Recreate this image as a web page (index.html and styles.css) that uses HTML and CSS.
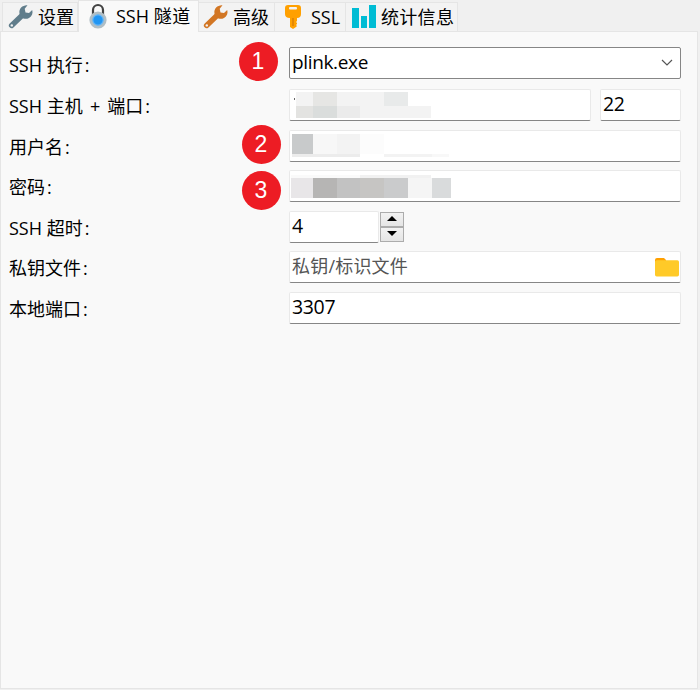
FILE: index.html
```
<!DOCTYPE html>
<html lang="zh-CN">
<head>
<meta charset="utf-8">
<title>SSH 隧道</title>
<link rel="stylesheet" href="styles.css">
</head>
<body>
<nav class="tabs">
  <div class="tab tab-settings">
    <svg class="icon" width="26" height="26" viewBox="0 0 26 26"><path d="M3.600 21.500 14 11.500" stroke="#607d8b" stroke-width="5.400" stroke-linecap="round"/><path d="M19.500 1.300 C15 .8 10.500 4.500 11.500 9.500 C12 14.500 17.500 16 21 14 C24 12.200 25.200 9 24.200 6 L21 9.100 L17.500 8.400 L16.700 4.800Z" fill="#607d8b"/><circle cx="3.800" cy="21.400" r="1.200" fill="#f3f3f3"/></svg>
    <span>设置</span>
  </div>
  <div class="tab tab-active">
    <svg class="icon" width="20" height="26" viewBox="0 0 20 26"><path d="M5 12V7a5 5 0 0 1 10 0V12" fill="none" stroke="#424242" stroke-width="2.200"/><circle cx="10" cy="17" r="8.600" fill="#b0bec5"/><circle cx="10" cy="17" r="5.200" fill="#2196f3" stroke="#64b5f6" stroke-width="1.200"/></svg>
    <span>SSH <em>隧道</em></span>
  </div>
  <div class="tab tab-advanced">
    <svg class="icon" width="26" height="26" viewBox="0 0 26 26"><path d="M3.600 21.500 14 11.500" stroke="#d27624" stroke-width="5.400" stroke-linecap="round"/><path d="M19.500 1.300 C15 .8 10.500 4.500 11.500 9.500 C12 14.500 17.500 16 21 14 C24 12.200 25.200 9 24.200 6 L21 9.100 L17.500 8.400 L16.700 4.800Z" fill="#d27624"/><circle cx="3.800" cy="21.400" r="1.200" fill="#f3f3f3"/></svg>
    <span>高级</span>
  </div>
  <div class="tab tab-ssl">
    <svg class="icon" width="18" height="26" viewBox="0 0 18 26"><path fill="#ffa000" d="M4 1h10q3 0 3 3v6q0 4-4 4v3l-1 1 1 1v1l-1 1 1 1-1 1-3 2-3-2V14Q1 14 1 10V4Q1 1 4 1Z"/><rect x="5" y="3" width="8" height="2.400" rx="1" fill="#f3f3f3"/><path d="M9 14v8" stroke="#d67c05" stroke-width="1.300"/></svg>
    <span>SSL</span>
  </div>
  <div class="tab tab-stats">
    <svg class="icon" width="24" height="26" viewBox="0 0 24 26" fill="#00bcd4"><path d="M0 4h7v20H0zM9 12h6v12H9zM17 1h7v23h-7z"/></svg>
    <span>统计信息</span>
  </div>
</nav>
<main class="panel">
  <div class="row"><label>SSH 执行<i>:</i></label>
    <div class="field select"><span class="exe">plink.exe</span><svg class="chevron" width="12" height="8" viewBox="0 0 12 8"><path d="M1 1l5 5 5-5" fill="none" stroke="#555" stroke-width="1.200"/></svg></div>
    <b class="badge badge-exe">1</b></div>
  <div class="row"><label>SSH 主机 <s>+</s> 端口<i>:</i></label>
    <div class="field host"><svg class="mask" width="160" height="30" shape-rendering="crispEdges"><path d="M3 9l2-1v2z" fill="#666"/><path fill="#f3f3f3" d="M6 2h17v14H6zM47 2h47v14H47zM70 16h71v12H70z"/><path fill="#e6e6e4" d="M23 2h24v14H23z"/><path fill="#e8eaea" d="M94 2h24v14H94z"/><path fill="#e3e3e1" d="M6 16h17v12H6z"/><path fill="#dadddc" d="M23 16h24v12H23z"/><path fill="#ebebeb" d="M47 16h23v12H47z"/></svg></div>
    <div class="field port">22</div></div>
  <div class="row"><label>用户名<i>:</i></label>
    <div class="field"><svg class="mask" width="170" height="30" shape-rendering="crispEdges"><path fill="#c8cacb" d="M2 3h21v20H2z"/><path fill="#f7f7f7" d="M23 3h24v20H23z"/><path fill="#f3f3f3" d="M47 3h23v20H47z"/><path fill="#fcfcfc" d="M70 3h24v20H70z"/><path fill="#ececec" d="M2 23h68v3H2z"/><path fill="#f3f3f3" d="M94 23h48v3H94z"/><path fill="#f8f8f8" d="M142 23h17v3H142z"/></svg></div>
    <b class="badge badge-user">2</b></div>
  <div class="row"><label>密码<i>:</i></label>
    <div class="field"><svg class="mask" width="170" height="30" shape-rendering="crispEdges"><path fill="#fafafa" d="M1 4h140v3H1z"/><path fill="#f1f1f1" d="M70 4h71v3H70z"/><path fill="#e8e6e8" d="M1 7h22v20H1z"/><path fill="#b6b5b4" d="M23 7h24v20H23z"/><path fill="#c2c2c2" d="M47 7h23v20H47z"/><path fill="#c6c5c3" d="M70 7h24v20H70z"/><path fill="#cacbcc" d="M94 7h24v20H94z"/><path fill="#f5f5f5" d="M118 7h24v20H118z"/><path fill="#d9dbdc" d="M142 7h19v20H142z"/></svg></div>
    <b class="badge badge-password">3</b></div>
  <div class="row"><label>SSH 超时<i>:</i></label>
    <div class="field timeout">4</div>
    <div class="spinner"><span><svg width="10" height="5"><path d="M0 5l5-5 5 5z"/></svg></span><span><svg width="10" height="5"><path d="M0 0l5 5 5-5z"/></svg></span></div></div>
  <div class="row"><label>私钥文件<i>:</i></label>
    <div class="field hint"><span>私钥/标识文件</span><svg class="folder" width="24" height="20" viewBox="0 0 24 20"><path d="M2 1h7l2 2v6H0V3q0-2 2-2z" fill="#ffa000"/><rect y="3.300" width="24" height="16.200" rx="1.700" fill="#ffca28"/></svg></div></div>
  <div class="row"><label>本地端口<i>:</i></label>
    <div class="field local">3307</div></div>
</main>
</body>
</html>
```
FILE: styles.css
```
* { box-sizing: border-box; }
body {
  margin: 0; height: 690px; padding-bottom: 1px;
  background: #f0f0f0; color: #000;
  font: 18px/24px "Open Sans", "Noto Sans CJK SC", sans-serif;
  display: flex; flex-direction: column; overflow: hidden;
}
svg { display: block; flex: none; }
.tabs { display: flex; height: 31px; padding-left: 2px; align-items: flex-end; flex: none; }
.tab {
  height: 29px; display: flex; align-items: center; white-space: nowrap;
  background: #f3f3f3; border: 1px solid #e5e5e5; border-width: 1px 1px 0 0;
}
.tab em { font-style: normal; letter-spacing: .5px; }
.tab-settings { width: 76px; padding-left: 5px; gap: 4px; border-left-width: 1px; }
.tab-active {
  width: 121px; height: 32px; margin-bottom: -1px; padding: 0 0 2px 9px; gap: 8px;
  background: #f9f9f9; border-left-width: 1px; position: relative; z-index: 1;
}
.tab-advanced { width: 76px; padding-left: 4px; gap: 4px; }
.tab-ssl { width: 71px; padding-left: 9px; gap: 9px; }
.tab-stats { width: 112px; padding-left: 6px; gap: 5px; letter-spacing: .3px; }
.panel {
  width: 698px; flex: 1; padding: 15px 16px 0 8px;
  background: #f9f9f9; border: 1px solid #e5e5e5;
  display: grid; grid-template-rows: 42px 41px 40px 41px 40px 41px 32px; align-content: start;
}
.row { display: flex; position: relative; align-items: flex-start; }
label { width: 280px; padding-top: 5px; flex: none; }
.row:first-child label { padding-top: 6px; }
label i { font-style: normal; margin-left: 2px; }
label s { text-decoration: none; margin: 0 2.500px; }
.field {
  flex: 1; height: 32px; display: flex; align-items: center; justify-content: space-between;
  padding: 0 1px 3px 2px; background: #fff; font-size: 19px; position: relative;
  border: 1px solid #e9e9e9; border-bottom-color: #868686; border-radius: 2px;
}
.select { border-color: #868686; }
.exe { letter-spacing: -.35px; }
.chevron { margin: 3px 6px 0 0; }
.mask { position: absolute; left: 0; top: 0; }
.host { flex: none; width: 302px; margin-right: 9px; }
.port, .local, .timeout { font-size: 19.500px; letter-spacing: -.35px; }
.timeout { flex: none; width: 90px; margin-right: 1px; }
.spinner { display: grid; grid-template-rows: 15px 15px; width: 24px; margin-top: 1px; }
.spinner span {
  display: flex; align-items: center; justify-content: center; padding-bottom: 2px;
  border: 1px solid #acacac; background: linear-gradient(#f2f2f2, #e5e5e5);
}
.hint { color: #555; font-size: 18px; letter-spacing: .2px; }
.folder { margin-top: 3px; }
.badge {
  position: absolute; left: 232.500px; width: 39px; height: 39px; border-radius: 50%;
  background: #ed1c24; color: #fff; text-align: center;
  font: 23px/39px "Liberation Sans", sans-serif;
}
.badge-exe { left: 229.500px; top: -5.500px; }
.badge-user { top: -5.500px; }
.badge-password { top: .5px; }
```
